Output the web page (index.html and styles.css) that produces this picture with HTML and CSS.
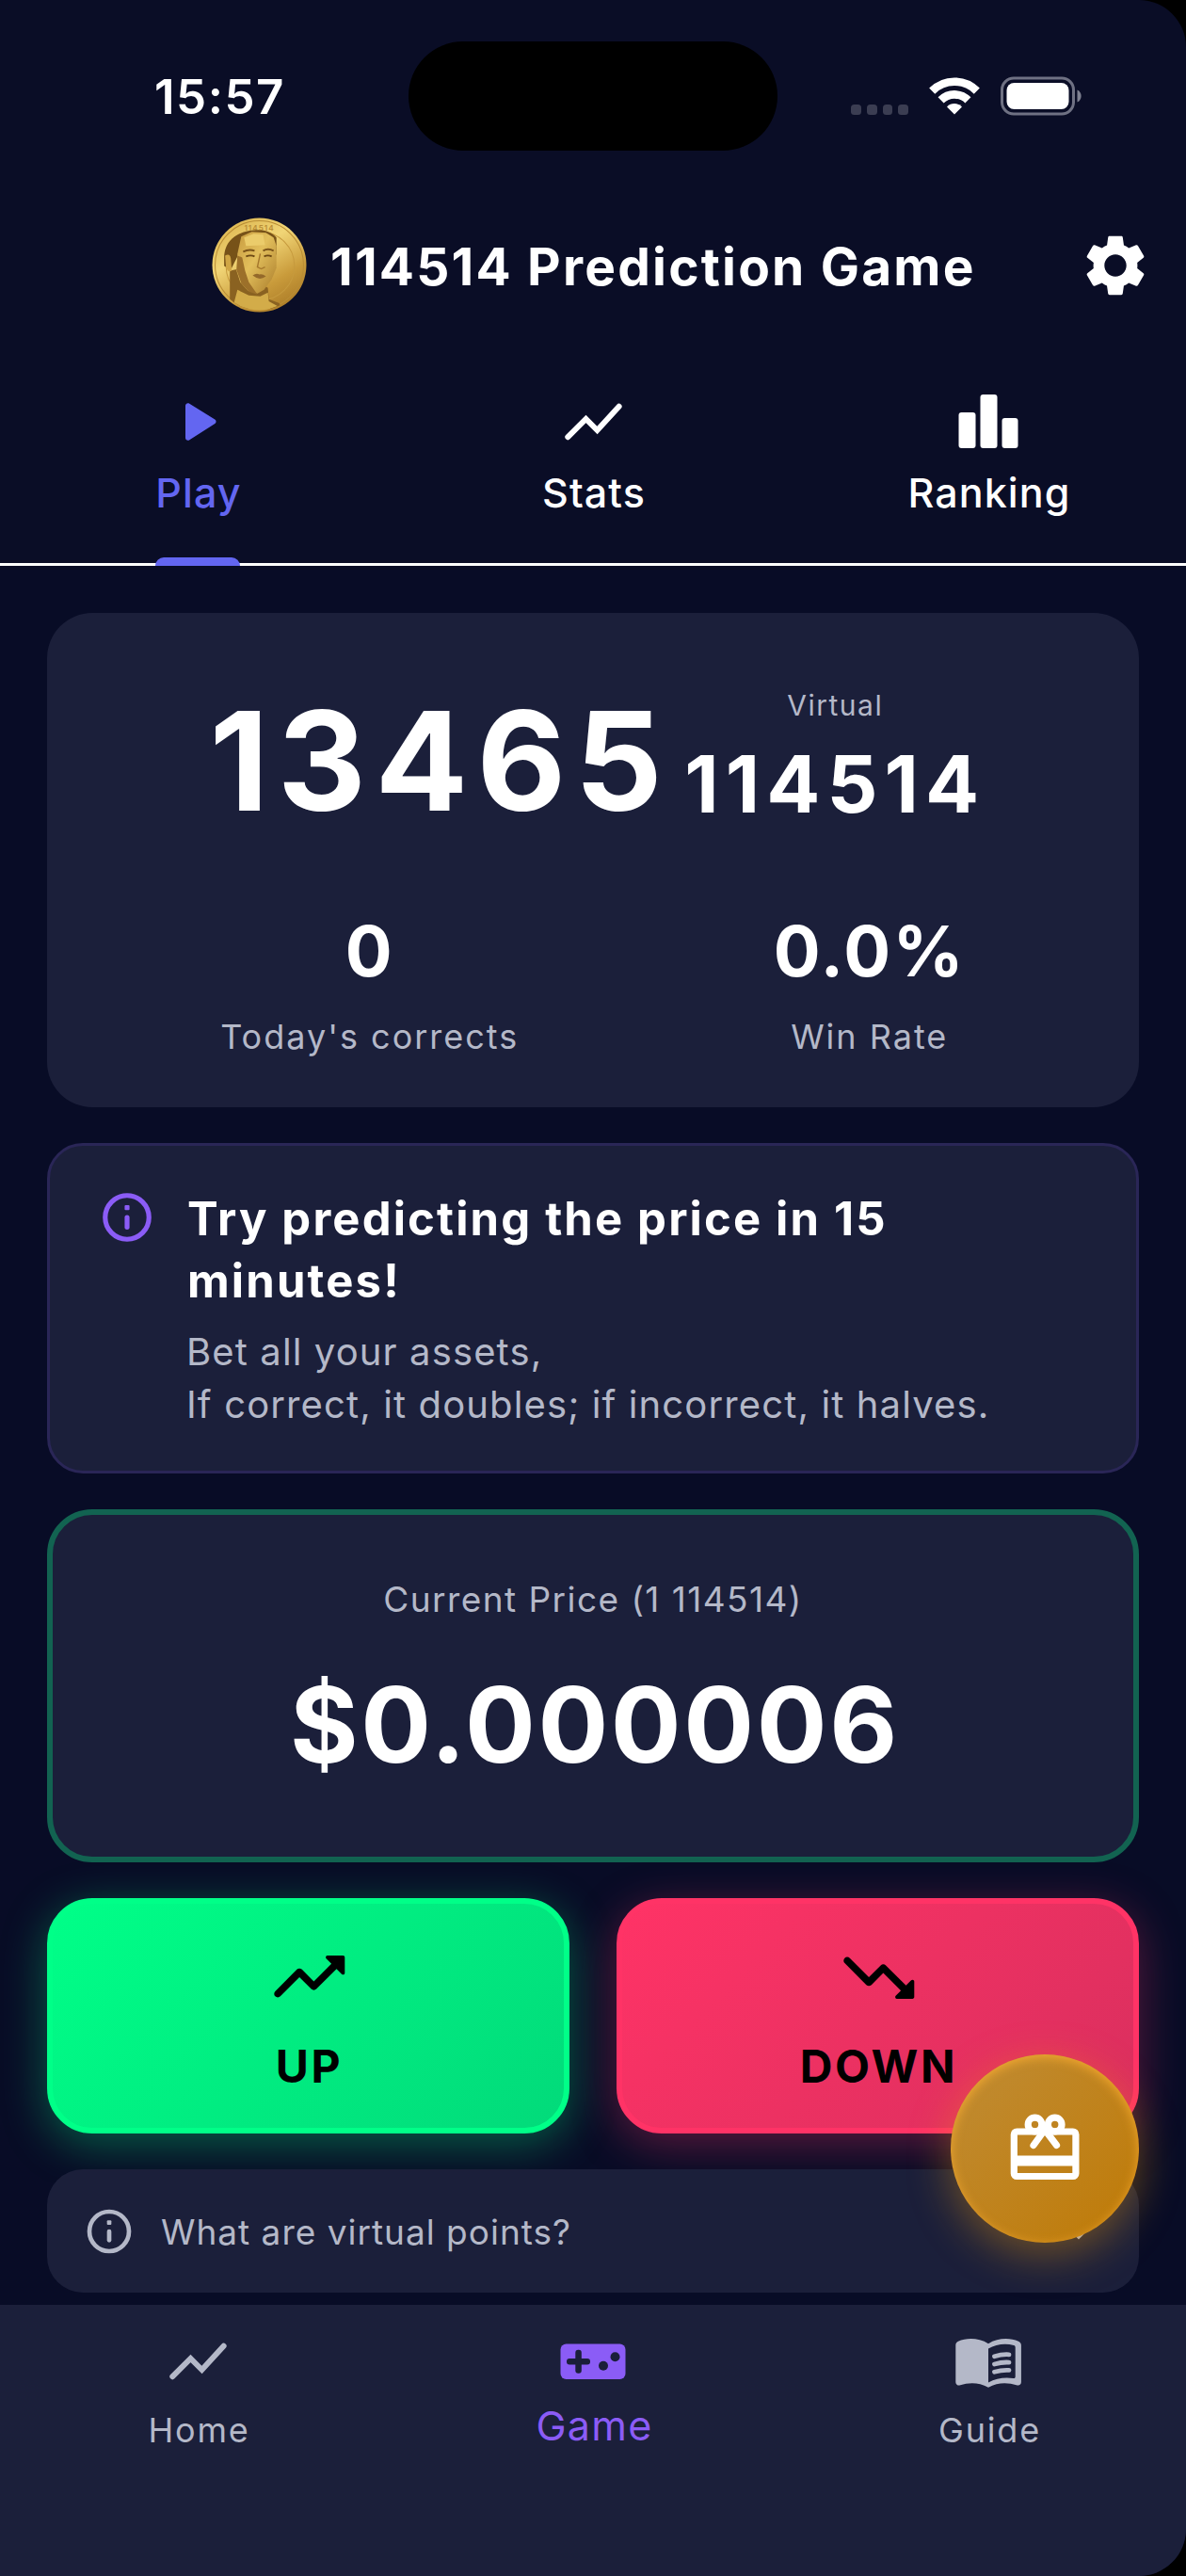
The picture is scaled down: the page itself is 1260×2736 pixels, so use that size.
FILE: index.html
```html
<!DOCTYPE html>
<html lang="en">
<head>
    <meta charset="UTF-8">
    <meta name="viewport" content="width=device-width, initial-scale=1.0">
    <title>114514 Prediction Game</title>
    <link rel="stylesheet" href="styles.css">
</head>
<body>
    <div class="screen">
        <!-- Status bar -->
        <div class="status-bar">
            <div class="status-left">15:57</div>
            <div class="island"></div>
            <div class="status-right">
                <div class="signal"><i></i><i></i><i></i><i></i></div>
                <svg class="wifi" viewBox="0 0 54 40">
                    <g fill="none" stroke="#fff" stroke-width="8.6">
                        <path d="M3.2 14.6A33.5 33.5 0 0 1 50.8 14.6"/>
                        <path d="M12.6 24.4A20.3 20.3 0 0 1 41.4 24.4"/>
                    </g>
                    <path d="M27 39.5 19 31.4a11.4 11.4 0 0 1 16 0z" fill="#fff"/>
                </svg>
                <svg class="battery" viewBox="0 0 88 42">
                    <rect x="1.5" y="2" width="76" height="38" rx="12.5" fill="none" stroke="#6f7183" stroke-width="3"/>
                    <rect x="6.5" y="7" width="66" height="28" rx="8" fill="#fff"/>
                    <path d="M81.5 14.5c5.5 2.2 5.5 10.8 0 13z" fill="#7f8191"/>
                </svg>
            </div>
        </div>

        <!-- Header -->
        <header class="app-bar">
            <svg class="coin" viewBox="0 0 100 100">
                <defs>
                    <linearGradient id="gold" x1="0.2" y1="0" x2="0.8" y2="1">
                        <stop offset="0" stop-color="#dcb54e"/>
                        <stop offset="0.35" stop-color="#f1d576"/>
                        <stop offset="0.7" stop-color="#c99b3b"/>
                        <stop offset="1" stop-color="#a87825"/>
                    </linearGradient>
                    <linearGradient id="skin" x1="0" y1="0" x2="1" y2="1">
                        <stop offset="0" stop-color="#c79a3e"/>
                        <stop offset="0.45" stop-color="#e2bf5c"/>
                        <stop offset="1" stop-color="#a97b2a"/>
                    </linearGradient>
                    <clipPath id="coinClip"><circle cx="50" cy="50" r="47.5"/></clipPath>
                </defs>
                <circle cx="50" cy="50" r="49.5" fill="url(#gold)"/>
                <circle cx="50" cy="50" r="46.5" fill="none" stroke="#b98d35" stroke-width="1"/>
                <circle cx="51" cy="51" r="36" fill="none" stroke="#c69a3e" stroke-width="1"/>
                <text class="coin-text" x="50" y="14" text-anchor="middle">114514</text>
                <g clip-path="url(#coinClip)">
                    <!-- neck and collar -->
                    <path d="M19 56v30l-4 10h58l-2-6-11-4-1-12-30-20z" fill="#8a6221"/>
                    <path d="M27 76l12 6 12 1 8-4 1 9 9 5-16 6H32l-9-8z" fill="#d3ac49"/>
                    <!-- hair -->
                    <path d="M13 42c0-9 4-17 11-22 7-5 16-7 25-7 8 0 15 3 19 8v18H28l-8 16-7-4z" fill="#775218"/>
                    <!-- ear -->
                    <path d="M14 40q5-3 6 3l1 13q-4 2-6-3z" fill="#d0a645"/>
                    <!-- face -->
                    <path d="M27 38l4-18 11-5 15 1 8 5 3 9v23l-5 12-8 11-7 4-10-3-8-9-4-12z" fill="url(#skin)"/>
                    <path d="M27 40l-1 15 5 14 8 9 9 3-9-13-4-12-3-14z" fill="#9c702a"/>
                    <path d="M34 21l10-4 10 1 2 11-20 1z" fill="#ebcc6b"/>
                    <path d="M33 36q6-3 12-1M54 35q5-3 11 0" fill="none" stroke="#7a5319" stroke-width="2"/>
                    <path d="M36 41q5-2 9 0M55 41q4-2 8 0" fill="none" stroke="#6c4814" stroke-width="1.8"/>
                    <path d="M51 38l-3 14 4 2 4-2" fill="none" stroke="#a5772b" stroke-width="1.4"/>
                    <path d="M43 61q4-3 7-1 3-1 7 2-7 5-14-1z" fill="#94692a"/>
                </g>
            </svg>
            <h1>114514 Prediction Game</h1>
            <svg class="gear" viewBox="0 0 24 24"><path fill="#fff" d="M19.14 12.94c.04-.3.06-.61.06-.94 0-.32-.02-.64-.07-.94l2.03-1.58c.18-.14.23-.41.12-.61l-1.92-3.32c-.12-.22-.37-.29-.59-.22l-2.39.96c-.5-.38-1.03-.7-1.62-.94l-.36-2.54c-.04-.24-.24-.41-.48-.41h-3.84c-.24 0-.43.17-.47.41l-.36 2.54c-.59.24-1.13.57-1.62.94l-2.39-.96c-.22-.08-.47 0-.59.22L2.74 8.87c-.12.21-.08.47.12.61l2.03 1.58c-.05.3-.09.63-.09.94s.02.64.07.94l-2.03 1.58c-.18.14-.23.41-.12.61l1.92 3.32c.12.22.37.29.59.22l2.39-.96c.5.38 1.03.7 1.62.94l.36 2.54c.05.24.24.41.48.41h3.84c.24 0 .44-.17.47-.41l.36-2.54c.59-.24 1.13-.56 1.62-.94l2.39.96c.22.08.47 0 .59-.22l1.92-3.32c.12-.22.07-.47-.12-.61l-2.01-1.58zM12 15.6c-1.98 0-3.6-1.62-3.6-3.6s1.62-3.6 3.6-3.6 3.6 1.62 3.6 3.6-1.62 3.6-3.6 3.6z"/></svg>
        </header>

        <!-- Tabs -->
        <div class="tabs">
            <div class="tab active">
                <svg class="icon" viewBox="0 0 72 72"><path fill="currentColor" d="M23 19v34c0 2.3 2.4 3.6 4.3 2.3l27-17.2c1.7-1.1 1.7-3.5 0-4.6l-27-16.8C25.4 15.4 23 16.7 23 19z"/></svg>
                <span>Play</span>
            </div>
            <div class="tab">
                <svg class="icon" viewBox="0 0 24 24"><path class="line" d="M3.1 17.4 9.5 11l4 4 7.7-8.4"/></svg>
                <span>Stats</span>
            </div>
            <div class="tab">
                <svg class="icon" viewBox="0 0 72 72" fill="currentColor">
                    <rect x="4.5" y="26" width="18" height="38" rx="3"/>
                    <rect x="27.5" y="7" width="18" height="57" rx="3"/>
                    <rect x="50.5" y="32" width="17" height="32" rx="3"/>
                </svg>
                <span>Ranking</span>
            </div>
        </div>

        <main class="content">
            <!-- Balance -->
            <section class="card balance">
                <div class="balance-row">
                    <div class="amount">13465</div>
                    <div class="unit">
                        <div class="unit-label">Virtual</div>
                        <div class="unit-name">114514</div>
                    </div>
                </div>
                <div class="stats-row">
                    <div class="stat">
                        <div class="stat-value">0</div>
                        <div class="stat-label">Today's corrects</div>
                    </div>
                    <div class="stat">
                        <div class="stat-value">0.0%</div>
                        <div class="stat-label">Win Rate</div>
                    </div>
                </div>
            </section>

            <!-- How to play -->
            <section class="card info">
                <svg class="info-icon" viewBox="0 0 24 24">
                    <circle cx="12" cy="12" r="9" fill="none" stroke="currentColor" stroke-width="2"/>
                    <rect x="11" y="7" width="2" height="2" rx=".4" fill="currentColor"/>
                    <rect x="11" y="11" width="2" height="6" rx="1" fill="currentColor"/>
                </svg>
                <div class="info-text">
                    <h2>Try predicting the price in 15<br>minutes!</h2>
                    <p>Bet all your assets,<br>If correct, it doubles; if incorrect, it halves.</p>
                </div>
            </section>

            <!-- Price -->
            <section class="card price">
                <div class="price-label">Current Price (1 114514)</div>
                <div class="price-value">$0.000006</div>
            </section>

            <!-- Bet buttons -->
            <div class="actions">
                <button class="bet up">
                    <svg class="trend" viewBox="0 0 24 24"><path d="M16.85 6.85l1.44 1.44-4.88 4.88-3.29-3.29c-.39-.39-1.02-.39-1.41 0l-6 6.01c-.39.39-.39 1.02 0 1.41.39.39 1.02.39 1.41 0L9.41 12l3.29 3.29c.39.39 1.02.39 1.41 0l5.59-5.58 1.44 1.44c.31.31.85.09.85-.35V6.5c.01-.28-.21-.5-.49-.5h-4.29c-.45 0-.67.54-.36.85z"/></svg>
                    <span>UP</span>
                </button>
                <button class="bet down">
                    <svg class="trend" viewBox="0 0 24 24"><path d="M16.85 6.85l1.44 1.44-4.88 4.88-3.29-3.29c-.39-.39-1.02-.39-1.41 0l-6 6.01c-.39.39-.39 1.02 0 1.41.39.39 1.02.39 1.41 0L9.41 12l3.29 3.29c.39.39 1.02.39 1.41 0l5.59-5.58 1.44 1.44c.31.31.85.09.85-.35V6.5c.01-.28-.21-.5-.49-.5h-4.29c-.45 0-.67.54-.36.85z"/></svg>
                    <span>DOWN</span>
                </button>
            </div>

            <div class="card points">
                <svg class="points-icon" viewBox="0 0 24 24">
                    <circle cx="12" cy="12" r="9" fill="none" stroke="currentColor" stroke-width="2"/>
                    <rect x="11" y="7" width="2" height="2" rx=".4" fill="currentColor"/>
                    <rect x="11" y="11" width="2" height="6" rx="1" fill="currentColor"/>
                </svg>
                <span>What are virtual points?</span>
                <svg class="chevron" viewBox="0 0 24 24"><path class="line" d="M7 10l5 5 5-5"/></svg>
            </div>
        </main>

        <!-- Bottom navigation -->
        <nav class="bottom-nav">
            <div class="nav-item">
                <svg class="icon" viewBox="0 0 24 24"><path class="line" d="M3.1 17.4 9.5 11l4 4 7.7-8.4"/></svg>
                <span>Home</span>
            </div>
            <div class="nav-item active">
                <svg class="icon" viewBox="0 0 72 72">
                    <rect x="1.5" y="17.5" width="69" height="37.5" rx="6" fill="currentColor"/>
                    <g fill="#1b1f3a">
                        <rect x="8" y="33" width="25" height="6.5" rx="3"/>
                        <rect x="17.3" y="23.7" width="6.5" height="25" rx="3"/>
                        <circle cx="47" cy="40.7" r="5"/>
                        <circle cx="59.5" cy="31.2" r="5"/>
                    </g>
                </svg>
                <span>Game</span>
            </div>
            <div class="nav-item">
                <svg class="icon" viewBox="0 0 72 72">
                    <path fill="currentColor" d="M1.3 19c0-2 .9-3.3 2.7-4.2C13 10.8 26 11 36 17.3 46 11 59 10.8 68 14.8c1.8.9 2.900 2.2 2.900 4.2v39c0 2.7-2.3 4.3-5 3.2C57 58.5 46 58 36 63.7 26 58 15 58.5 6.3 61.2c-2.7 1.1-5-.5-5-3.2z"/>
                    <path fill="#1b1f3a" d="M36 22.5c8-4.5 18-6 27-3.400 1.2.4 1.7 1 1.7 2.200v30.900c0 1.4-.8 2-2.2 1.700C53 52.5 44 54 36 58.5z"/>
                    <path fill="none" stroke="currentColor" stroke-width="4.8" stroke-linecap="round" d="M42.5 30.7q8-2.4 15.5-1.900M42.5 39q8-2.4 15.5-1.900M42.5 47.300q8-2.4 15.5-1.900"/>
                </svg>
                <span>Guide</span>
            </div>
        </nav>

        <!-- Floating gift button -->
        <button class="fab">
            <svg class="gift" viewBox="0 0 88 88" fill="none" stroke="#fff" stroke-width="7.2">
                <rect x="11.3" y="26" width="65.6" height="47.5" rx="3"/>
                <path d="M9 57h70" stroke-width="11"/>
                <circle cx="33.5" cy="18.5" r="7.3"/>
                <circle cx="54.7" cy="18.5" r="7.3"/>
                <path d="M44 24 32 40.5M44 24l12.5 16.5" stroke-linecap="round"/>
            </svg>
        </button>
    </div>
</body>
</html>
```
FILE: styles.css
```css
* {
    box-sizing: border-box;
    margin: 0;
    padding: 0;
}

html {
    background: #000;
}

body {
    width: 1260px;
    height: 2736px;
    font-family: Inter, "Liberation Sans", sans-serif;
    color: #fff;
    overflow: hidden;
}

svg {
    display: block;
    flex: none;
}

button {
    font-family: inherit;
    border: none;
}

.screen {
    position: relative;
    display: flex;
    flex-direction: column;
    width: 1260px;
    height: 2736px;
    background: #0a0d26;
    border-radius: 0 50px 50px 0;
    overflow: hidden;
}

.icon {
    width: 72px;
    height: 72px;
}

.line {
    fill: none;
    stroke: currentColor;
    stroke-width: 2;
    stroke-linecap: round;
}

/* Status bar */
.status-bar {
    display: flex;
    align-items: center;
    height: 203px;
}

.status-left {
    width: 434px;
    padding-left: 164px;
    font-size: 51px;
    font-weight: 600;
    letter-spacing: 1.5px;
    line-height: 62px;
    padding-top: 2px;
}

.island {
    width: 392px;
    height: 116px;
    border-radius: 58px;
    background: #000;
}

.status-right {
    display: flex;
    align-items: center;
    padding-left: 78px;
}

.signal {
    display: flex;
    gap: 6px;
    margin-top: 29px;
    margin-right: 22px;
}

.signal i {
    width: 10.8px;
    height: 11px;
    border-radius: 3.5px;
    background: #3b3d52;
}

.wifi {
    width: 54px;
    height: 40px;
    margin-right: 22px;
}

.battery {
    width: 88px;
    height: 42px;
}

/* Header */
.app-bar {
    display: flex;
    align-items: center;
    height: 157px;
    padding-left: 225px;
    padding-right: 36px;
}

.coin {
    width: 101px;
    height: 101px;
}

.coin-text {
    font-size: 8px;
    font-weight: 600;
    letter-spacing: 1px;
    fill: #b98d35;
}

.app-bar h1 {
    flex: 1;
    margin-left: 25px;
    padding-top: 3px;
    font-size: 55px;
    font-weight: 700;
    letter-spacing: 2.2px;
    line-height: 66px;
    white-space: nowrap;
}

.gear {
    width: 78px;
    height: 78px;
}

/* Tabs */
.tabs {
    display: grid;
    grid-template-columns: repeat(3, 1fr);
    height: 241px;
    border-bottom: 3px solid #fff;
}

.tab {
    position: relative;
    display: flex;
    flex-direction: column;
    align-items: center;
    padding-top: 52px;
    gap: 13px;
}

.tab span {
    padding-left: 2px;
    font-size: 43px;
    font-weight: 500;
    letter-spacing: 1.1px;
    line-height: 52px;
}

.tab.active {
    color: #6366f1;
}

.tab.active::after {
    content: "";
    position: absolute;
    left: 50%;
    bottom: -3px;
    width: 90px;
    height: 9px;
    margin-left: -45px;
    border-radius: 9px 9px 0 0;
    background: #6366f1;
}

/* Content */
.content {
    display: flex;
    flex-direction: column;
    gap: 38px;
    height: 1847px;
    padding: 50px 50px 0;
    background: #080c26;
}

.card {
    background: #1b1f3a;
    border-radius: 48px;
}

.balance {
    height: 525px;
    padding-top: 70px;
}

.balance-row {
    display: flex;
    justify-content: center;
    align-items: flex-start;
    gap: 14px;
    padding-left: 10px;
}

.amount {
    font-size: 146px;
    font-weight: 700;
    letter-spacing: 9.3px;
    line-height: 174px;
}

.unit {
    text-align: center;
    padding-top: 6px;
}

.unit-label {
    font-size: 30px;
    letter-spacing: 1.5px;
    line-height: 44px;
    color: #b4b8c8;
}

.unit-name {
    font-size: 84.5px;
    font-weight: 700;
    letter-spacing: 7.1px;
    line-height: 122px;
}

.stats-row {
    display: flex;
    justify-content: space-around;
    padding: 0 49px;
    margin-top: 71px;
}

.stat {
    text-align: center;
}

.stat-value {
    font-size: 74px;
    font-weight: 700;
    letter-spacing: 2.2px;
    line-height: 88px;
}

.stat-label {
    font-size: 36px;
    letter-spacing: 2px;
    line-height: 44px;
    margin-top: 25px;
    color: #b4b8c8;
}

.info {
    display: flex;
    height: 351px;
    padding: 45px 0 0 51px;
    border: 3px solid #2a2657;
    border-radius: 38px;
}

.info-icon {
    width: 62px;
    height: 62px;
    color: #8b5cf6;
}

.info-text {
    margin-left: 33px;
}

.info h2 {
    font-size: 49px;
    font-weight: 700;
    letter-spacing: 2.15px;
    line-height: 65.5px;
    white-space: nowrap;
}

.info p {
    margin-top: 15px;
    margin-left: -1px;
    font-size: 40px;
    letter-spacing: 1.12px;
    line-height: 56px;
    color: #b4b8c8;
    white-space: nowrap;
}

.price {
    height: 375px;
    padding-top: 68px;
    border: 6px solid #126351;
    text-align: center;
}

.price-label {
    font-size: 37px;
    letter-spacing: 1.45px;
    line-height: 44px;
    color: #b4b8c8;
}

.price-value {
    padding-left: 4px;
    font-size: 111px;
    font-weight: 700;
    letter-spacing: 2.6px;
    line-height: 134px;
    margin-top: 44px;
}

/* Bet buttons */
.actions {
    display: grid;
    grid-template-columns: 1fr 1fr;
    gap: 50px;
}

.bet {
    display: flex;
    flex-direction: column;
    align-items: center;
    height: 250px;
    padding-top: 32px;
    border-radius: 48px;
    color: #000;
}

.bet span {
    margin-top: 19px;
    padding-left: 2px;
    font-size: 48px;
    font-weight: 700;
    letter-spacing: 2.6px;
    line-height: 60px;
}

.trend {
    width: 92px;
    height: 92px;
}

.up {
    border: 6px solid #00ff88;
    background: linear-gradient(135deg, #00ff88, #02da7a);
    box-shadow: 0 11px 48px rgba(0, 255, 136, 0.34);
}

.down {
    border: 6px solid #ff3366;
    background: linear-gradient(135deg, #ff3366, #d92f5e);
    box-shadow: 0 11px 48px rgba(255, 51, 102, 0.34);
}

.down .trend {
    transform: scaleY(-1);
}

.points {
    position: relative;
    display: flex;
    align-items: center;
    height: 131px;
    padding: 0 41px 0 38px;
    border-radius: 38px;
    color: #b4b8c8;
}

.points-icon {
    width: 56px;
    height: 56px;
}

.points span {
    flex: 1;
    margin-left: 27px;
    padding-top: 2px;
    font-size: 37px;
    letter-spacing: 1px;
    line-height: 44px;
}

.chevron {
    width: 46px;
    height: 46px;
}

/* Bottom navigation */
.bottom-nav {
    display: grid;
    grid-template-columns: repeat(3, 1fr);
    flex: 1;
    padding-top: 24px;
    background: #1b1f3a;
    color: #b4b8c8;
}

.nav-item {
    display: flex;
    flex-direction: column;
    align-items: center;
    gap: 15px;
}

.nav-item span {
    padding-left: 3px;
    font-size: 36px;
    letter-spacing: 1.8px;
    line-height: 44px;
}

.nav-item.active {
    gap: 6px;
    color: #8b5cf6;
}

.nav-item.active span {
    font-size: 43px;
    letter-spacing: 1.3px;
    line-height: 52px;
}

/* Floating button over the list */
.fab {
    position: absolute;
    right: 50px;
    bottom: 354px;
    display: flex;
    align-items: center;
    justify-content: center;
    width: 200px;
    height: 200px;
    border-radius: 50%;
    background: linear-gradient(135deg, #c08c35, #bf7a06);
    box-shadow: 0 12px 46px rgba(245, 158, 11, 0.4), inset 0 3px 12px rgba(255, 176, 50, 0.8);
}

.gift {
    width: 88px;
    height: 88px;
}
```
